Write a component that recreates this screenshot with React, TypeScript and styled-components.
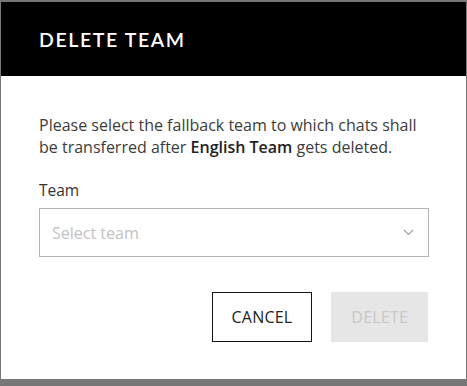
import React, { useState } from 'react';
import styled, { createGlobalStyle } from 'styled-components';

const GlobalStyle = createGlobalStyle`
  html, body {
    margin: 0;
    padding: 0;
    background: #777777;
  }
  body {
    font-family: 'Open Sans', 'Liberation Sans', sans-serif;
  }
`;

const Backdrop = styled.div`
  padding: 2px 1px 0 1px;
  height: 386px;
  box-sizing: border-box;
`;

const Dialog = styled.div`
  width: 465px;
  height: 377px;
  background: #ffffff;
  display: flex;
  flex-direction: column;
`;

const Header = styled.div`
  height: 74px;
  background: #000000;
  display: flex;
  align-items: center;
  padding: 0 38px;
`;

const Title = styled.h2`
  margin: 0;
  color: #ffffff;
  font-family: 'Lato', 'Noto Sans', sans-serif;
  font-weight: 600;
  font-size: 19.5px;
  letter-spacing: 1.6px;
`;

const Body = styled.div`
  padding: 38px 38px 0 38px;
  display: flex;
  flex-direction: column;
`;

const Message = styled.p`
  margin: 0;
  font-size: 16px;
  line-height: 22px;
  color: #3c3c3c;
`;

const Strong = styled.span`
  font-weight: 600;
  color: #222222;
`;

const Label = styled.label`
  margin-top: 21px;
  font-size: 15.5px;
  color: #333333;
`;

const SelectBox = styled.button`
  margin-top: 7px;
  height: 49px;
  width: 390px;
  border: 1px solid #b4b4b4;
  background: #ffffff;
  display: flex;
  align-items: center;
  justify-content: space-between;
  padding: 0 14px 0 12px;
  font-family: inherit;
  font-size: 16px;
  color: #c2c2c2;
  cursor: pointer;
`;

const Actions = styled.div`
  margin-top: 35px;
  display: flex;
  justify-content: flex-end;
  gap: 19px;
`;

const ActionButton = styled.button<{ $primary?: boolean }>`
  height: 50px;
  padding: 0 19px;
  font-family: inherit;
  font-size: 16px;
  letter-spacing: 0.2px;
  border: 1px solid ${({ $primary }) => ($primary ? '#e6e6e6' : '#111111')};
  background: ${({ $primary }) => ($primary ? '#e6e6e6' : '#ffffff')};
  color: ${({ $primary }) => ($primary ? '#c8c8c8' : '#222222')};
  cursor: ${({ $primary }) => ($primary ? 'default' : 'pointer')};
`;

const Chevron = () => (
  <svg width="11" height="7" viewBox="0 0 11 7" fill="none">
    <path d="M1 1l4.5 4.5L10 1" stroke="#a0a0a0" strokeWidth="1.1" />
  </svg>
);

export default function App() {
  const [team] = useState<string | null>(null);

  return (
    <>
      <GlobalStyle />
      <Backdrop>
        <Dialog>
          <Header>
            <Title>DELETE TEAM</Title>
          </Header>
          <Body>
            <Message>
              Please select the fallback team to which chats shall be transferred after{' '}
              <Strong>English Team</Strong> gets deleted.
            </Message>
            <Label>Team</Label>
            <SelectBox type="button">
              <span>{team ?? 'Select team'}</span>
              <Chevron />
            </SelectBox>
            <Actions>
              <ActionButton type="button">CANCEL</ActionButton>
              <ActionButton type="button" $primary disabled={!team}>
                DELETE
              </ActionButton>
            </Actions>
          </Body>
        </Dialog>
      </Backdrop>
    </>
  );
}
